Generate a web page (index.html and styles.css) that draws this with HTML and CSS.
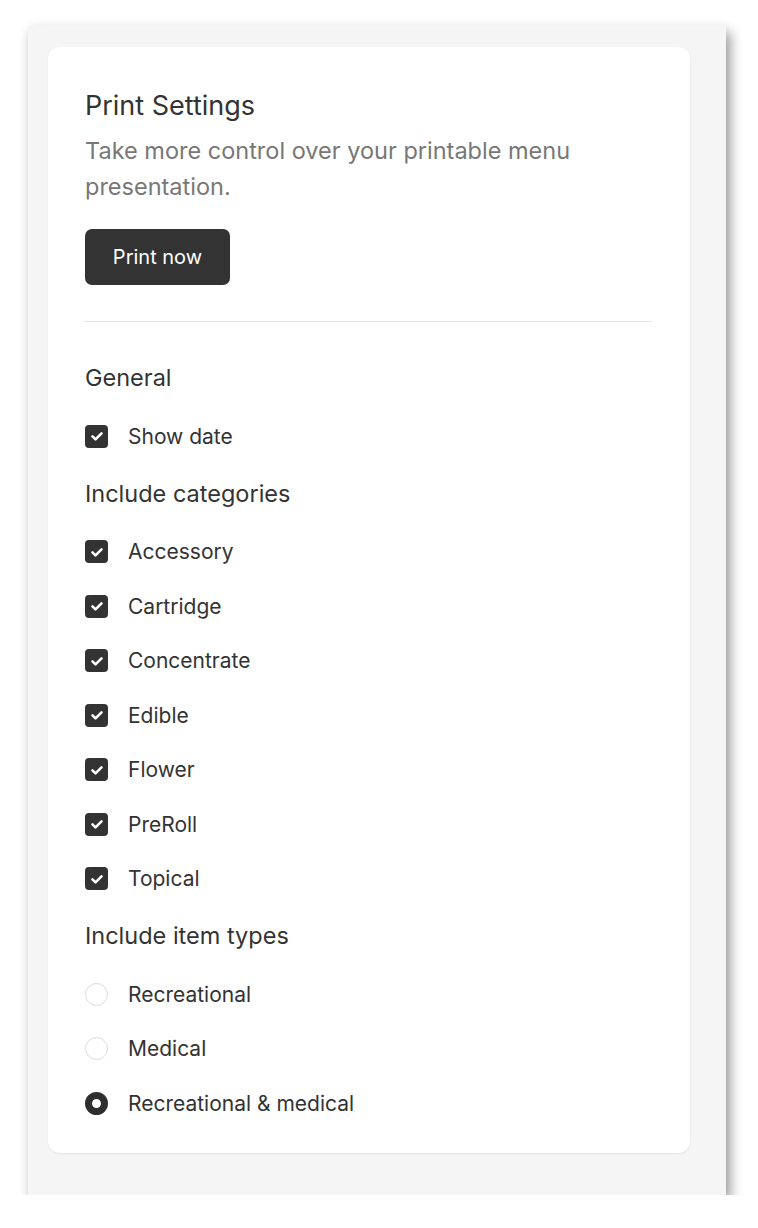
FILE: index.html
```html
<!DOCTYPE html>
<html>
<head>
<meta charset="utf-8">
<link rel="stylesheet" href="styles.css">
</head>
<body>
<div class="frame">
  <div class="card">
    <h1 class="title">Print Settings</h1>
    <p class="desc">Take more control over your printable menu presentation.</p>
    <button class="btn">Print now</button>
    <hr class="divider">

    <section class="section">
      <h2 class="heading">General</h2>
      <div class="row"><span class="check"><svg viewBox="0 0 22 22" width="22" height="22"><path d="M6.5 11.3l3 3 6-6" fill="none" stroke="#fff" stroke-width="2.6" stroke-linecap="round" stroke-linejoin="round"/></svg></span><span class="label">Show date</span></div>
    </section>

    <section class="section">
      <h2 class="heading">Include categories</h2>
      <div class="row"><span class="check"><svg viewBox="0 0 22 22" width="22" height="22"><path d="M6.5 11.3l3 3 6-6" fill="none" stroke="#fff" stroke-width="2.6" stroke-linecap="round" stroke-linejoin="round"/></svg></span><span class="label">Accessory</span></div>
      <div class="row"><span class="check"><svg viewBox="0 0 22 22" width="22" height="22"><path d="M6.5 11.3l3 3 6-6" fill="none" stroke="#fff" stroke-width="2.6" stroke-linecap="round" stroke-linejoin="round"/></svg></span><span class="label">Cartridge</span></div>
      <div class="row"><span class="check"><svg viewBox="0 0 22 22" width="22" height="22"><path d="M6.5 11.3l3 3 6-6" fill="none" stroke="#fff" stroke-width="2.6" stroke-linecap="round" stroke-linejoin="round"/></svg></span><span class="label">Concentrate</span></div>
      <div class="row"><span class="check"><svg viewBox="0 0 22 22" width="22" height="22"><path d="M6.5 11.3l3 3 6-6" fill="none" stroke="#fff" stroke-width="2.6" stroke-linecap="round" stroke-linejoin="round"/></svg></span><span class="label">Edible</span></div>
      <div class="row"><span class="check"><svg viewBox="0 0 22 22" width="22" height="22"><path d="M6.5 11.3l3 3 6-6" fill="none" stroke="#fff" stroke-width="2.6" stroke-linecap="round" stroke-linejoin="round"/></svg></span><span class="label">Flower</span></div>
      <div class="row"><span class="check"><svg viewBox="0 0 22 22" width="22" height="22"><path d="M6.5 11.3l3 3 6-6" fill="none" stroke="#fff" stroke-width="2.6" stroke-linecap="round" stroke-linejoin="round"/></svg></span><span class="label">PreRoll</span></div>
      <div class="row"><span class="check"><svg viewBox="0 0 22 22" width="22" height="22"><path d="M6.5 11.3l3 3 6-6" fill="none" stroke="#fff" stroke-width="2.6" stroke-linecap="round" stroke-linejoin="round"/></svg></span><span class="label">Topical</span></div>
    </section>

    <section class="section">
      <h2 class="heading">Include item types</h2>
      <div class="row"><span class="radio"></span><span class="label">Recreational</span></div>
      <div class="row"><span class="radio"></span><span class="label">Medical</span></div>
      <div class="row"><span class="radio radio-on"></span><span class="label">Recreational &amp; medical</span></div>
    </section>
  </div>
</div>
</body>
</html>
```

FILE: styles.css
```css
* { box-sizing: border-box; }
html, body { margin: 0; padding: 0; background: #ffffff; }
body {
  font-family: "Inter", "Noto Sans", sans-serif;
  color: #333333;
  padding: 25px 0 0 28px;
}
.frame {
  width: 698px;
  height: 1170px;
  background: #f5f5f5;
  padding: 22px 36px 0 20px;
  box-shadow: 4px 7px 12px rgba(0, 0, 0, 0.42);
}
.card {
  background: #ffffff;
  border-radius: 12px;
  height: 1106px;
  padding: 44px 38px 24px 37px;
  box-shadow: 0 1px 2px rgba(0, 0, 0, 0.08);
}
.title {
  margin: 0;
  font-size: 27px;
  line-height: 30px;
  font-weight: 400;
  color: #333333;
}
.desc {
  margin: 12px 0 0 0;
  font-size: 23.5px;
  line-height: 36px;
  color: #777777;
}
.btn {
  display: block;
  margin-top: 24px;
  height: 56px;
  width: 145px;
  padding: 0;
  border: none;
  border-radius: 7px;
  background: #333333;
  color: #ffffff;
  font-family: inherit;
  font-size: 20px;
  font-weight: 400;
}
.divider {
  margin: 36px 0 0 0;
  border: none;
  border-top: 1px solid #e2e2e2;
  height: 0;
}
.section { margin-top: 15px; }
.section:first-of-type { margin-top: 41px; }
.heading {
  margin: 0 0 16px 0;
  font-size: 23.5px;
  line-height: 30px;
  font-weight: 400;
  color: #333333;
}
.row {
  height: 54.5px;
  display: flex;
  align-items: center;
  gap: 20px;
}
.check {
  width: 23px;
  height: 23px;
  border-radius: 4px;
  background: #333333;
  display: flex;
}
.check svg { margin: 0.5px; }
.radio {
  width: 23px;
  height: 23px;
  border-radius: 50%;
  border: 1.5px solid #dcdce0;
  background: #fff;
}
.radio-on {
  border: 7px solid #2e2e2e;
}
.label {
  font-size: 21px;
  color: #333333;
}
```
